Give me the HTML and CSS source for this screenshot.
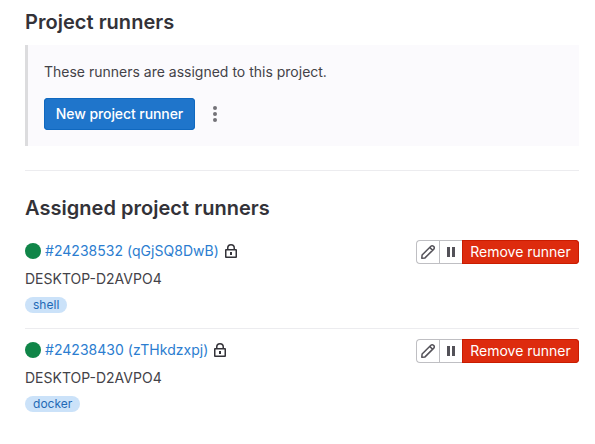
FILE: index.html
```html
<!DOCTYPE html>
<html lang="en">
<head>
<meta charset="utf-8">
<title>Project runners</title>
<link rel="stylesheet" href="styles.css">
</head>
<body>
<svg width="0" height="0" class="sprite">
  <symbol id="lock" viewBox="0 0 16 16"><path fill="currentColor" fill-rule="evenodd" d="M8 1a4 4 0 0 0-4 4v1H3a1 1 0 0 0-1 1v7a1 1 0 0 0 1 1h10a1 1 0 0 0 1-1V7a1 1 0 0 0-1-1h-1V5a4 4 0 0 0-4-4zm2.500 5V5a2.500 2.500 0 0 0-5 0v1zM3.500 7.500v6h9v-6zM7 9h2v3H7z"/></symbol>
  <symbol id="pencil" viewBox="0 0 16 16"><path fill="none" stroke="currentColor" stroke-width="1.500" stroke-linejoin="round" d="M1.800 14.200l.3-3.200 8.800-8.800a1.750 1.750 0 0 1 2.500 0l.4.4a1.750 1.750 0 0 1 0 2.500L5 13.900zM9.700 3.400l2.900 2.900"/></symbol>
  <symbol id="pause" viewBox="0 0 16 16"><path fill="currentColor" d="M4 3h3v10H4zM9 3h3v10H9z"/></symbol>
</svg>
<main class="page">
  <h2 class="title">Project runners</h2>
  <section class="callout">
    <p class="callout-text">These runners are assigned to this project.</p>
    <div class="actions">
      <button class="new-btn">New project runner</button>
      <svg class="more" viewBox="0 0 16 16"><circle cx="8" cy="2" r="2"/><circle cx="8" cy="8" r="2"/><circle cx="8" cy="14" r="2"/></svg>
    </div>
  </section>
  <hr class="rule">
  <h2 class="title assigned">Assigned project runners</h2>
  <ul class="runners">
    <li class="runner">
      <div class="info">
        <div class="line"><span class="dot"></span><a class="link">#24238532 (qGjSQ8DwB)</a><svg class="lock"><use href="#lock"/></svg></div>
        <div class="host">DESKTOP-D2AVPO4</div>
        <span class="badge">shell</span>
      </div>
      <div class="group">
        <button class="icon-btn edit" aria-label="Edit"><svg><use href="#pencil"/></svg></button>
        <button class="icon-btn" aria-label="Pause"><svg><use href="#pause"/></svg></button>
        <button class="remove">Remove runner</button>
      </div>
    </li>
    <li class="runner">
      <div class="info">
        <div class="line"><span class="dot"></span><a class="link">#24238430 (zTHkdzxpj)</a><svg class="lock"><use href="#lock"/></svg></div>
        <div class="host">DESKTOP-D2AVPO4</div>
        <span class="badge">docker</span>
      </div>
      <div class="group">
        <button class="icon-btn edit" aria-label="Edit"><svg><use href="#pencil"/></svg></button>
        <button class="icon-btn" aria-label="Pause"><svg><use href="#pause"/></svg></button>
        <button class="remove">Remove runner</button>
      </div>
    </li>
  </ul>
</main>
</body>
</html>
```
FILE: styles.css
```css
* { box-sizing: border-box; }
body { margin: 0; background: #fff; color: #434248; font: 14px/20px Inter, "Liberation Sans", sans-serif; }
button { font: inherit; margin: 0; padding: 0; border: 0; white-space: nowrap; }
svg { display: block; }
.sprite { position: absolute; }
.page { width: 554px; margin-left: 25px; padding-top: 10px; }
.title { margin: 0; color: #333238; font-size: 20px; line-height: 24px; font-weight: 600; letter-spacing: 0.03px; white-space: nowrap; }
.callout { margin-top: 11px; height: 101px; padding: 17px 16px 16px; border-left: 3px solid #dcdcde; background: #fbfafd; }
.callout-text { margin: 0 0 16px; }
.actions { display: flex; align-items: center; gap: 12px; }
.new-btn { width: 151px; height: 32px; border-radius: 4px; background: #1f75cb; box-shadow: inset 0 0 0 1px #1068bf; color: #fff; font-weight: 500; letter-spacing: -0.08px; }
.more { width: 16px; height: 16px; fill: #737278; }
.rule { margin: 24px 0 0; border: 0; border-top: 1px solid #ececef; }
.assigned { margin-top: 25px; }
.runners { list-style: none; margin: 9px 0 0; padding: 0; }
.runner { display: flex; justify-content: space-between; align-items: flex-start; height: 99px; padding-top: 10px; }
.runner + .runner { border-top: 1px solid #ececef; padding-top: 9px; }
.line { display: flex; align-items: center; height: 24px; }
.dot { width: 16px; height: 16px; border-radius: 50%; background: #108548; margin-right: 4px; }
.link { color: #2b7dd0; letter-spacing: 0.03px; }
.lock { width: 16px; height: 16px; margin-left: 3.7px; color: #333238; }
.host { margin-top: 6px; }
.badge { display: block; width: fit-content; height: 16px; margin-top: 8px; padding: 0 8px; border-radius: 8px; background: #cbe2f9; color: #1f69b5; font-size: 12px; line-height: 16px; letter-spacing: 0.03px; }
.group { display: flex; height: 24px; margin-top: 1px; }
.icon-btn { display: flex; align-items: center; justify-content: center; width: 23px; height: 24px; border: 1px solid #bfbfc3; border-right: 0; background: #fff; color: #535158; }
.icon-btn svg { width: 16px; height: 16px; }
.edit { border-radius: 4px 0 0 4px; }
.remove { width: 117px; height: 24px; border-radius: 0 4px 4px 0; background: #dd2b0e; box-shadow: inset 0 0 0 1px #c91c00; color: #fff; }
```
